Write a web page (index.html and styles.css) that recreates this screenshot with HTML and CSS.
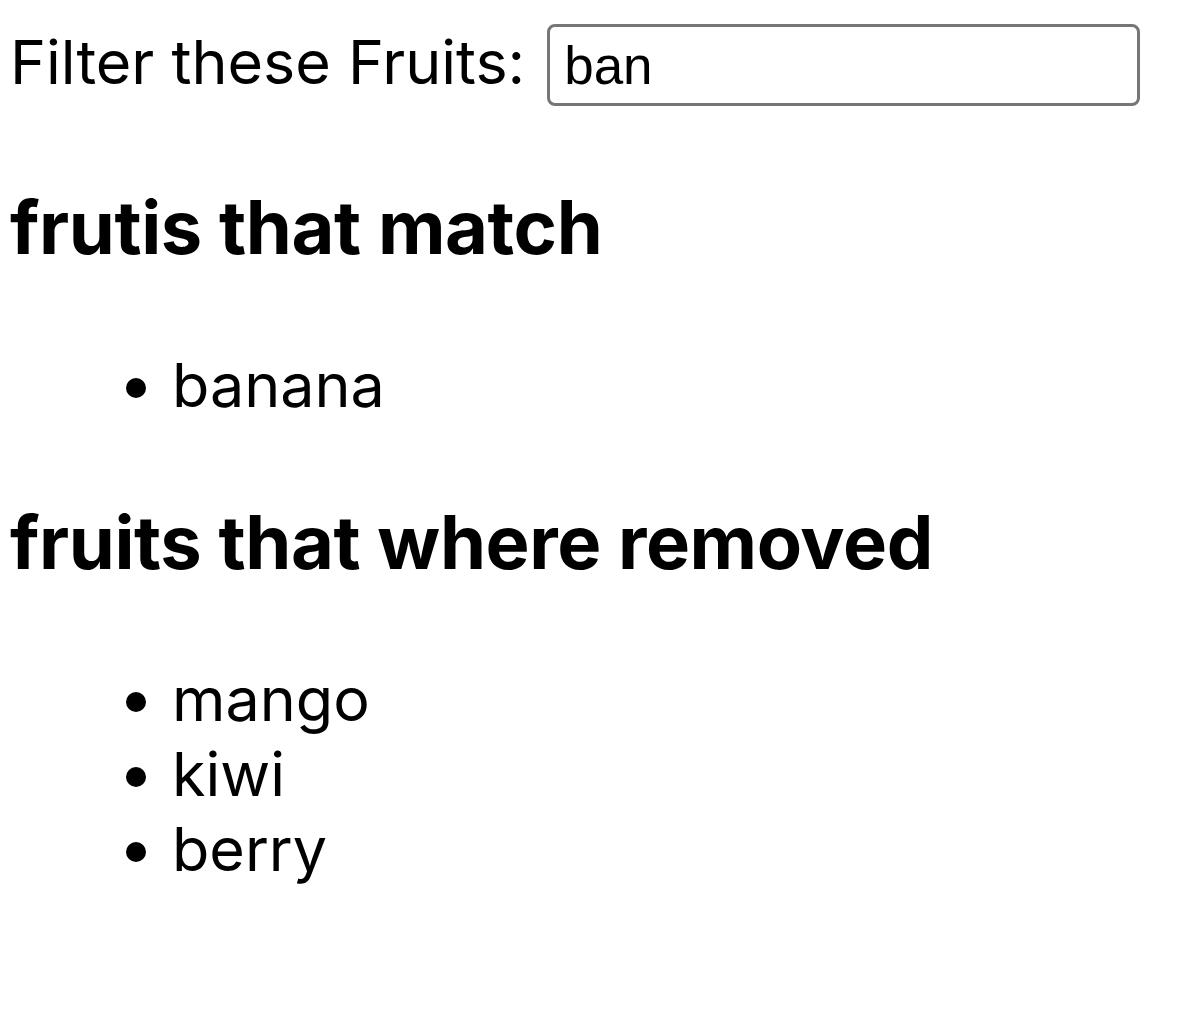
FILE: index.html
```html
<!DOCTYPE html>
<html>
<head>
<meta charset="utf-8">
<link rel="stylesheet" href="styles.css">
</head>
<body>
<div class="filter-row">
  <label class="filter-label" for="q">Filter these Fruits:</label>
  <input id="q" class="filter-input" type="text" value="ban">
</div>
<h3 class="section-title first">frutis that match</h3>
<ul class="fruit-list first">
  <li>banana</li>
</ul>
<h3 class="section-title second">fruits that where removed</h3>
<ul class="fruit-list second">
  <li>mango</li>
  <li>kiwi</li>
  <li>berry</li>
</ul>
</body>
</html>
```
FILE: styles.css
```css
html, body {
  margin: 0;
  padding: 0;
  background: #fff;
}
body {
  font-family: Inter, "Noto Sans", sans-serif;
  font-size: 61px;
  line-height: 75px;
  color: #000;
  padding-left: 10px;
}
.filter-row {
  display: flex;
  align-items: flex-start;
  gap: 22px;
  margin-top: 24px;
}
.filter-label {
  display: block;
  padding-top: 1px;
}
.filter-input {
  box-sizing: border-box;
  width: 593px;
  height: 82px;
  border: 3px solid #767676;
  border-radius: 8px;
  padding: 0 0 0 14px;
  font-family: "Liberation Sans", Arial, sans-serif;
  font-size: 53px;
  color: #000;
  outline: none;
  margin: 0;
}
.section-title {
  font-size: 74px;
  line-height: 91px;
  font-weight: 700;
  letter-spacing: -0.4px;
  margin: 0;
}
.section-title.first {
  margin-top: 76px;
}
.section-title.second {
  margin-top: 74px;
}
.fruit-list {
  margin: 0;
  padding-left: 162px;
  list-style: disc;
}
.fruit-list.first {
  margin-top: 75px;
}
.fruit-list.second {
  margin-top: 74px;
}
```
